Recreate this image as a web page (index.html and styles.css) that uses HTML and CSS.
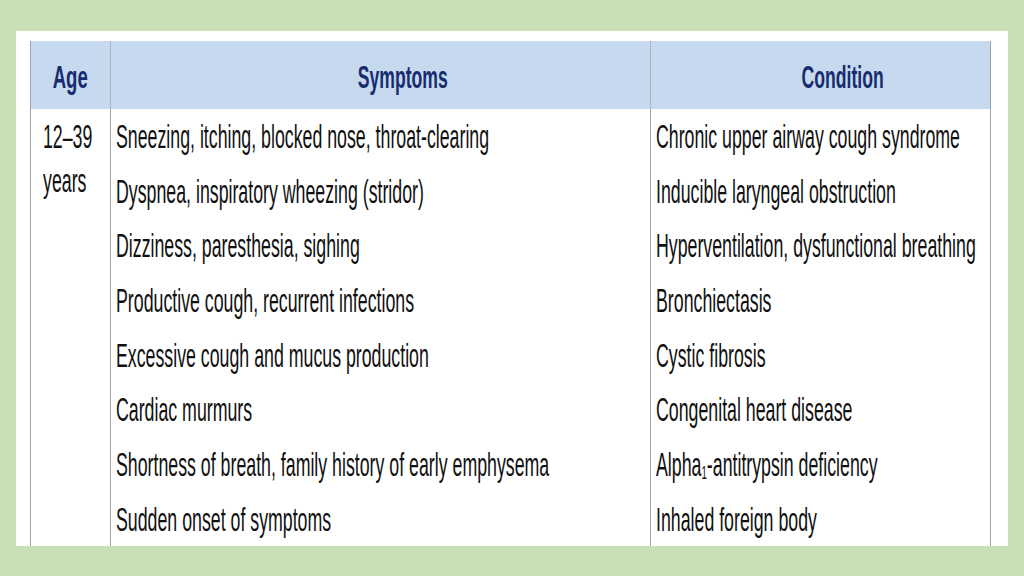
FILE: index.html
```html
<!DOCTYPE html>
<html>
<head>
<meta charset="utf-8">
<link rel="stylesheet" href="styles.css">
</head>
<body>
<div class="slide">
  <div class="panel">
    <div class="grid">
      <div class="th th-age"><span class="h">Age</span></div>
      <div class="th th-wide"><span class="h">Symptoms</span></div>
      <div class="th th-wide th-last"><span class="h">Condition</span></div>

      <div class="td age"><span class="t">12–39<br>years</span></div>

      <div class="td"><span class="t">Sneezing, itching, blocked nose, throat-clearing</span></div>
      <div class="td last"><span class="t">Chronic upper airway cough syndrome</span></div>

      <div class="td"><span class="t">Dyspnea, inspiratory wheezing (stridor)</span></div>
      <div class="td last"><span class="t">Inducible laryngeal obstruction</span></div>

      <div class="td"><span class="t">Dizziness, paresthesia, sighing</span></div>
      <div class="td last"><span class="t">Hyperventilation, dysfunctional breathing</span></div>

      <div class="td"><span class="t">Productive cough, recurrent infections</span></div>
      <div class="td last"><span class="t">Bronchiectasis</span></div>

      <div class="td"><span class="t">Excessive cough and mucus production</span></div>
      <div class="td last"><span class="t">Cystic fibrosis</span></div>

      <div class="td"><span class="t">Cardiac murmurs</span></div>
      <div class="td last"><span class="t">Congenital heart disease</span></div>

      <div class="td"><span class="t">Shortness of breath, family history of early emphysema</span></div>
      <div class="td last"><span class="t">Alpha<sub>1</sub>-antitrypsin deficiency</span></div>

      <div class="td"><span class="t">Sudden onset of symptoms</span></div>
      <div class="td last"><span class="t">Inhaled foreign body</span></div>
    </div>
  </div>
</div>
</body>
</html>
```

FILE: styles.css
```css
html, body {
  margin: 0;
  padding: 0;
}

body {
  width: 1024px;
  height: 576px;
  overflow: hidden;
  background: #c8dfb8;
  font-family: "Liberation Sans", Arial, sans-serif;
}

.slide {
  padding: 31px 16px 0 16px;
}

.panel {
  width: 992px;
  height: 515px;
  background: #ffffff;
  overflow: hidden;
  padding: 10px 0 0 14px;
  box-sizing: border-box;
}

.grid {
  display: grid;
  grid-template-columns: 80px 540px 341px;
  grid-template-rows: 68px repeat(8, 54.7px);
}

.th {
  background: #c6d9ef;
  border-left: 1px solid #a9b4c2;
  display: flex;
  align-items: center;
  justify-content: center;
  color: #172c6e;
  font-weight: bold;
  font-size: 32px;
  line-height: 36px;
  box-sizing: border-box;
  padding-top: 3px;
}

.th-age {
  border-left-color: #9aa3ad;
}

.th-wide {
  padding-left: 44px;
}

.th-last {
  border-right: 1px solid #9aa3ad;
}

.h {
  display: inline-block;
  transform: scaleX(0.55);
  transform-origin: 50% 50%;
  white-space: nowrap;
}

.th-age .h {
  transform: scaleX(0.58);
}

.td {
  border-left: 1px solid #a0a0a0;
  box-sizing: border-box;
  padding: 6px 0 0 5px;
  font-size: 33.5px;
  line-height: 44px;
  color: #111111;
  white-space: nowrap;
}

.td.last {
  border-right: 1px solid #a0a0a0;
}

.age {
  grid-row: span 8;
  padding-left: 12px;
}

.t {
  display: inline-block;
  transform: scaleX(0.53);
  transform-origin: 0 50%;
}

sub {
  font-size: 55%;
  vertical-align: -3px;
  line-height: 0;
}
```
